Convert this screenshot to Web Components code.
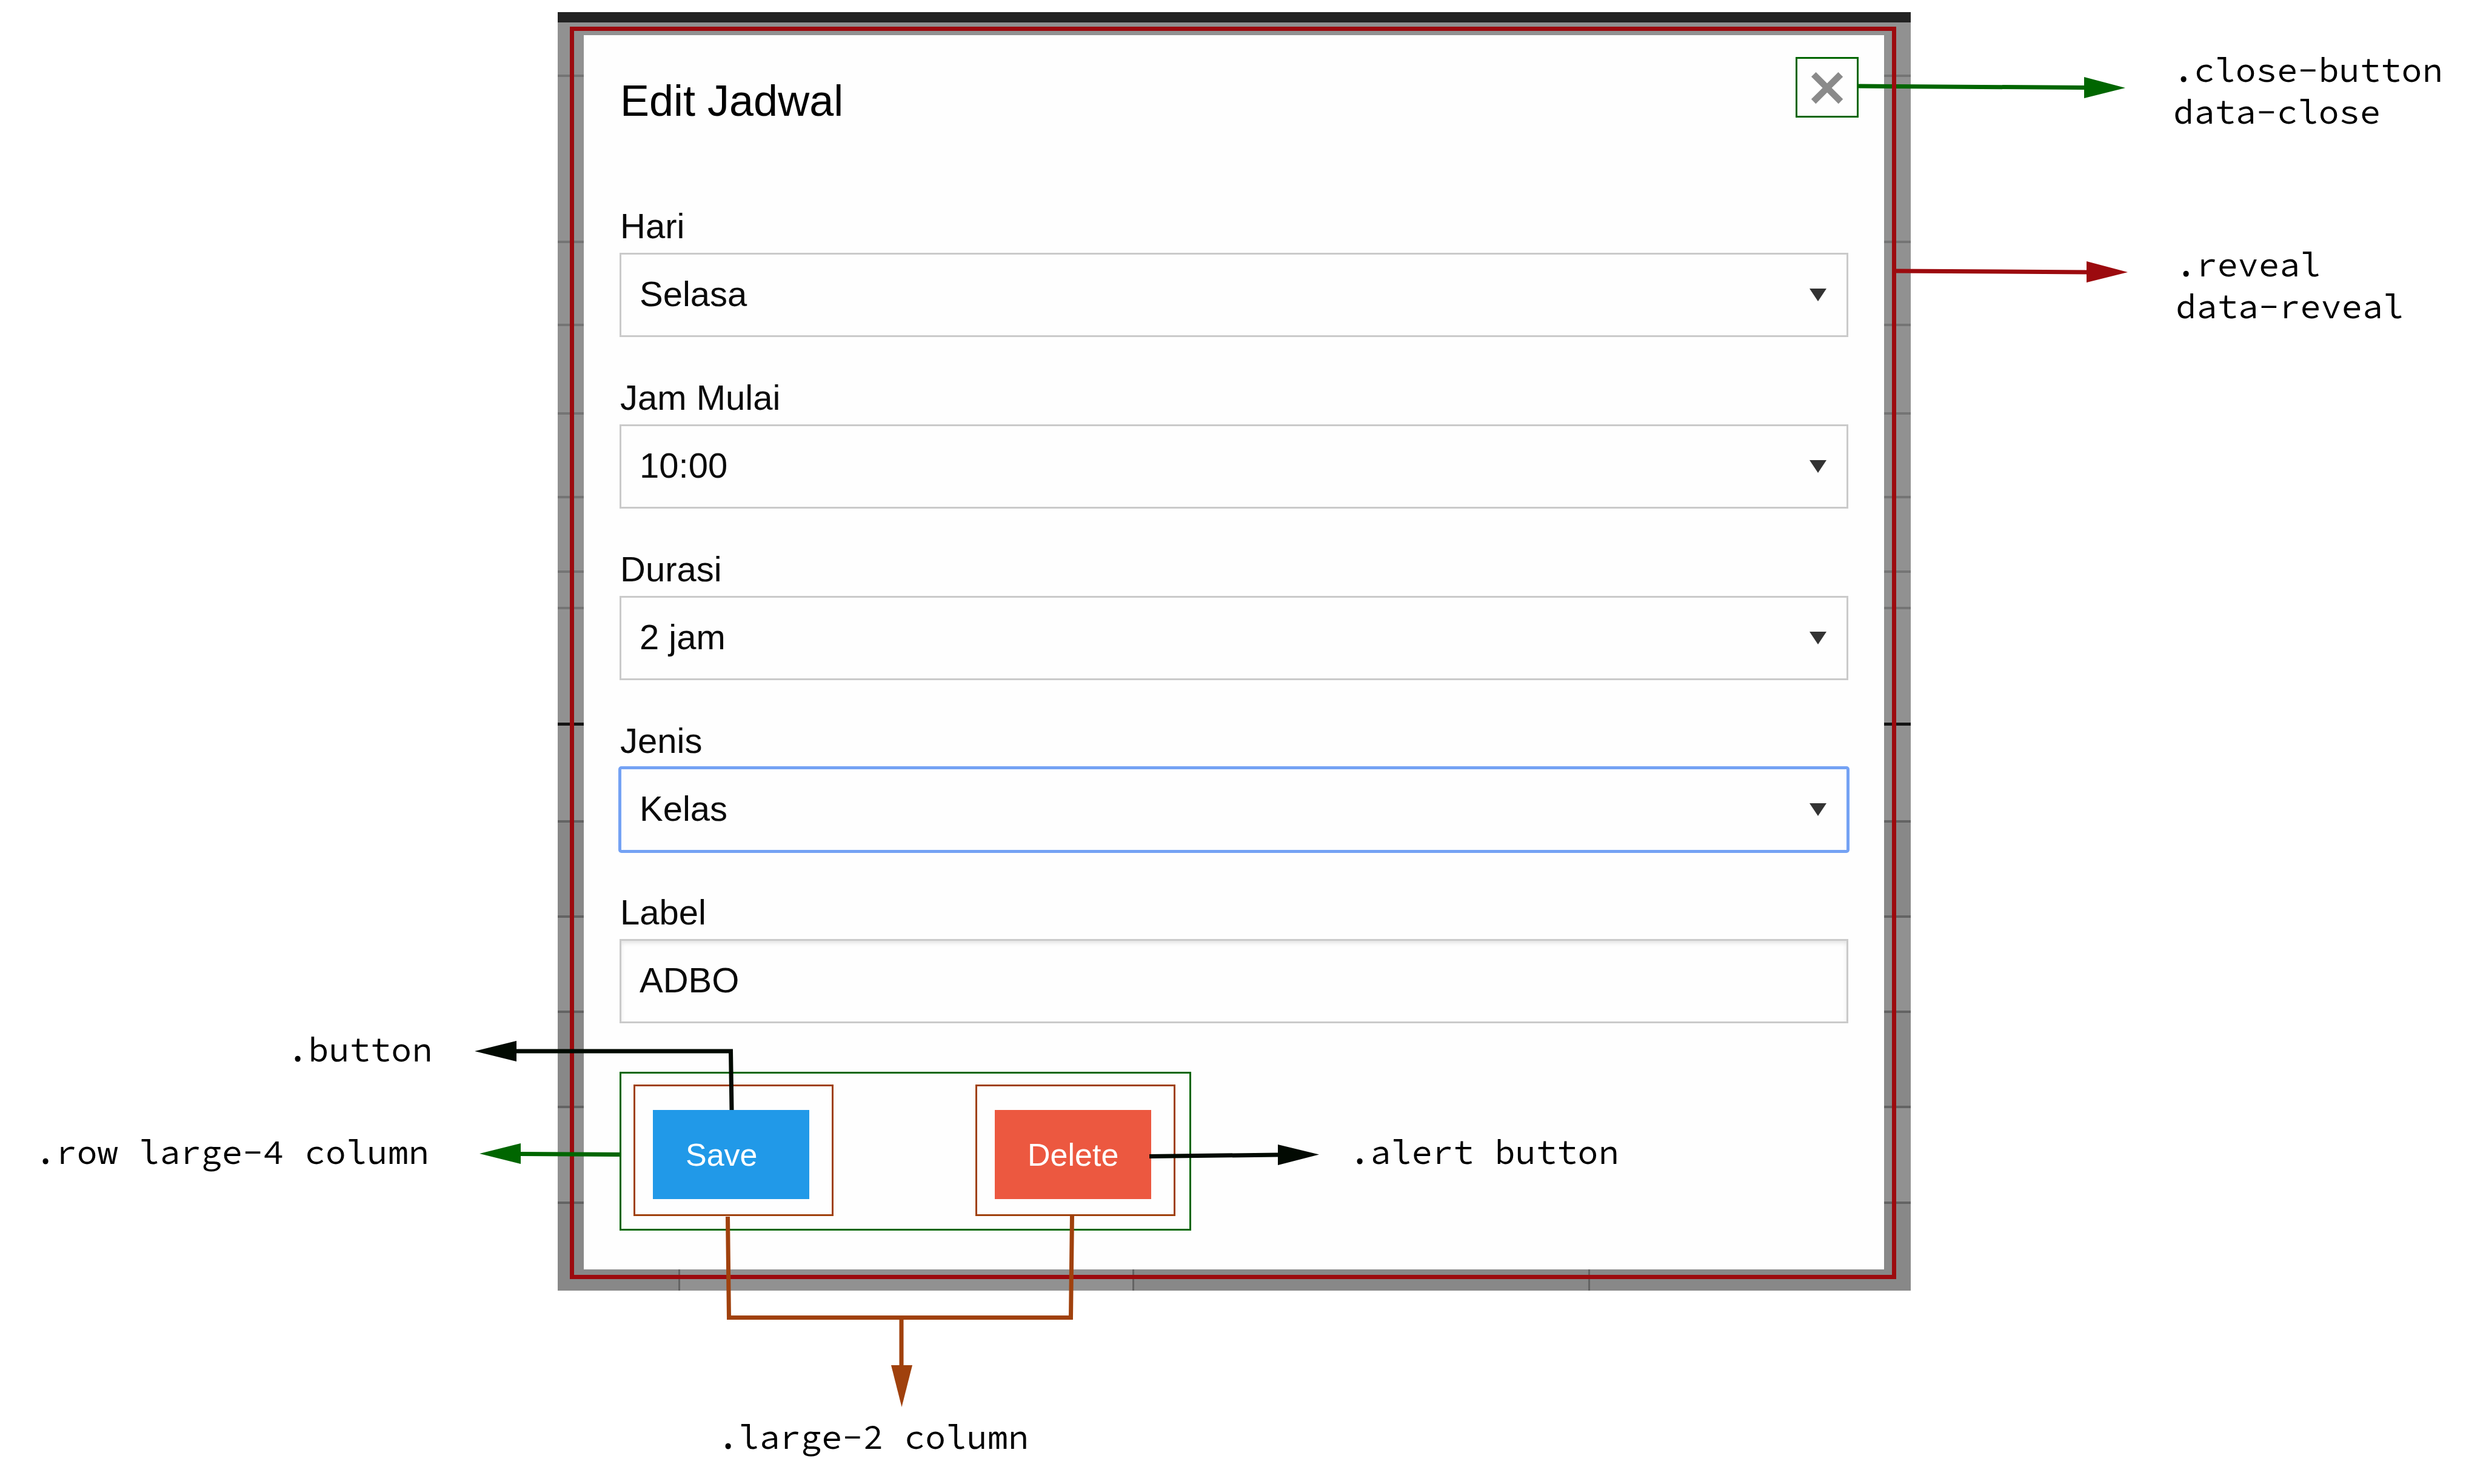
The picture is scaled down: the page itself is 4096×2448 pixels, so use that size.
<!DOCTYPE html>
<html lang="id">
<head>
<meta charset="utf-8">
<title>Edit Jadwal</title>
<style>
  body { margin: 0; background: #fff; color: #0a0a0a; font-family: "Liberation Sans", Arial, sans-serif; }
</style>
</head>
<body>
<annotated-page>
  <schedule-backdrop>
    <reveal-modal heading="Edit Jadwal">
      <form-field label="Hari" value="Selasa" kind="select"></form-field>
      <form-field label="Jam Mulai" value="10:00" kind="select"></form-field>
      <form-field label="Durasi" value="2 jam" kind="select"></form-field>
      <form-field label="Jenis" value="Kelas" kind="select" active></form-field>
      <form-field label="Label" value="ADBO" kind="text"></form-field>
      <button-row slot="actions">
        <action-button>Save</action-button>
        <action-button alert>Delete</action-button>
      </button-row>
    </reveal-modal>
  </schedule-backdrop>

  <arrow-layer slot="start" side="start"></arrow-layer>
  <call-out slot="start" style="--x:-446px;--y:1677px">.button</call-out>
  <call-out slot="start" style="--x:-862px;--y:1846px">.row large-4 column</call-out>
  <call-out slot="start" style="--x:1306px;--y:1846px">.alert button</call-out>
  <call-out slot="start" style="--x:264px;--y:2316px">.large-2 column</call-out>

  <arrow-layer slot="end" side="end"></arrow-layer>
  <call-out slot="end" style="--x:433px;--y:61px">.close-button<br>data-close</call-out>
  <call-out slot="end" style="--x:437px;--y:382px">.reveal<br>data-reveal</call-out>
</annotated-page>

<script>
const define = (name, html, setup) => customElements.define(name, class extends HTMLElement {
  constructor() {
    super();
    this.attachShadow({ mode: 'open' }).innerHTML = html;
  }
  connectedCallback() { if (setup) setup(this, this.shadowRoot); }
});

// Page: a frame between two gutters; notes hang from the frame's two top corners.
define('annotated-page', `
  <style>
    :host { display: grid; grid-template-columns: 920fr 2232fr 944fr; padding-top: 20px; overflow: hidden; min-height: calc(100vh - 20px); align-items: start; }
    main { grid-column: 2; position: relative; }
    .anchor { position: absolute; top: 0; width: 0; height: 0; }
    .start { left: 0; }
    .end { left: 100%; }
  </style>
  <main>
    <slot></slot>
    <div class="anchor start"><slot name="start"></slot></div>
    <div class="anchor end"><slot name="end"></slot></div>
  </main>`);

// Dimmed timetable behind the dialog.
define('schedule-backdrop', `
  <style>
    :host {
      display: block; padding: 24px 24px 19px 20px;
      --l: #919191; --d: #888; --r: #747474; --s: #636363;
      background:
        linear-gradient(90deg, var(--d) 199px, var(--s) 199px 202px, var(--l) 202px 948px, var(--s) 948px 951px, var(--d) 951px 1700px, var(--s) 1700px 1703px, var(--d) 1703px) 0 1966px / 100% 200px no-repeat,
        linear-gradient(
          #222 0 17px, var(--l) 17px 103px,
          var(--r) 103px 107px, var(--l) 107px 377px,
          var(--r) 377px 381px, var(--l) 381px 514px,
          var(--r) 514px 518px, var(--l) 518px 660px,
          var(--r) 660px 664px, var(--l) 664px 798px,
          var(--r) 798px 802px, var(--l) 802px 921px,
          var(--r) 921px 925px, var(--l) 925px 981px,
          var(--r) 981px 985px, var(--l) 985px 1172px,
          #141414 1172px 1177px, var(--l) 1177px 1333px,
          var(--s) 1333px 1337px, var(--d) 1337px 1490px,
          var(--s) 1490px 1494px, var(--l) 1494px 1647px,
          var(--s) 1647px 1651px, var(--d) 1651px 1804px,
          var(--s) 1804px 1808px, var(--l) 1808px 1962px,
          var(--s) 1962px 1966px, var(--d) 1966px);
    }
    .outline { border: 7px solid #9c0a0e; padding: 7px 13px 9px 16px; }
  </style>
  <div class="outline"><slot></slot></div>`);

define('reveal-modal', `
  <style>
    :host { display: block; background: #fefefe; }
    header { display: flex; justify-content: space-between; align-items: flex-start; padding: 36px 42px 0 60px; }
    h1 { margin: 32px 0 0; font-size: 72px; line-height: 80px; font-weight: 400; color: #000; }
    button { width: 104px; height: 100px; padding: 0; border: 3px solid #060; background: none; color: #8a8a8a; font: 108px/94px "Liberation Sans", Arial, sans-serif; -webkit-text-stroke: 3px #8a8a8a; }
    form { display: flex; flex-direction: column; gap: 58px; padding: 125px 59px 0; }
    footer { padding: 80px 59px 64px; }
  </style>
  <header><h1></h1><button type="button" aria-label="Close">×</button></header>
  <form><slot></slot></form>
  <footer><slot name="actions"></slot></footer>`,
  (el, root) => { root.querySelector('h1').textContent = el.getAttribute('heading'); });

define('form-field', `
  <style>
    :host { display: block; }
    label { display: block; font-size: 58px; line-height: 84px; padding: 0 0 2px 1px; }
    .box { display: grid; align-items: center; }
    .box > * { grid-area: 1 / 1; }
    select, input {
      appearance: none; box-sizing: border-box; width: 100%; height: 139px; margin: 0; padding: 0 30px 4px;
      border: 3px solid #cacaca; border-radius: 0; background: #fefefe; outline: none;
      color: #0a0a0a; font: 58px "Liberation Sans", Arial, sans-serif;
    }
    input { box-shadow: inset 0 4px 6px rgba(10,10,10,.1); }
    svg { justify-self: end; margin-right: 36px; width: 28px; height: 21px; pointer-events: none; }
    :host([active]) select { border-color: #74a2f4; border-radius: 3px; box-shadow: 0 0 0 2px #74a2f4; }
  </style>
  <label for="control"></label>
  <div class="box"></div>`,
  (el, root) => {
    const value = el.getAttribute('value');
    root.querySelector('label').textContent = el.getAttribute('label');
    root.querySelector('.box').innerHTML = el.getAttribute('kind') === 'select'
      ? `<select id="control"><option>${value}</option></select><svg viewBox="0 0 28 21"><path d="M0 0H28L14 21Z" fill="#333"/></svg>`
      : `<input id="control" type="text" value="${value}">`;
  });

define('button-row', `
  <style>
    :host { display: flex; justify-content: space-between; box-sizing: border-box; width: 943px; border: 3px solid #060; padding: 18px 23px 21px 20px; }
  </style>
  <slot></slot>`);

define('action-button', `
  <style>
    :host { display: block; box-sizing: border-box; width: 330px; height: 217px; border: 3px solid #a0410d; padding: 39px 0 0 29px; }
    button { display: block; width: 258px; height: 147px; border: 0; padding: 0 0 0 54px; text-align: left; background: #2199e8; color: #fefefe; font: 52px "Liberation Sans", Arial, sans-serif; }
    :host([alert]) button { background: #ec5840; }
  </style>
  <button type="button"><slot></slot></button>`);

define('call-out', `
  <style>
    :host { position: absolute; left: var(--x); top: var(--y); white-space: nowrap; color: #000; font: 57px/69px "Source Code Pro", "DejaVu Sans Mono", monospace; }
  </style>
  <slot></slot>`);

// Arrows, in coordinates shared by both sides; each side is shifted to its anchor.
const arrows = {
  start: `<g transform="translate(-920 -20)">
    <path d="M851 1734H1205.500L1207 1831" class="k"/><path d="M783 1734L852 1717V1751Z" fill="#020a02"/>
    <path d="M1023 1904.500L859 1903.500" class="g"/><path d="M791 1903L859 1886V1920Z" fill="#060"/>
    <path d="M1896 1907.500L2108 1905" class="k"/><path d="M2176 1904.500L2108 1888V1922Z" fill="#020a02"/>
    <path d="M1200.500 2007L1202.500 2173.500H1766.500L1768.500 2005M1487 2174V2253" class="b"/><path d="M1470 2252H1505L1487.500 2321Z" fill="#a0410d"/>
  </g>`,
  end: `<g transform="translate(-3152 -20)">
    <path d="M3066 142L3121 142.500M3128 142.500L3438 144.500" class="g"/><path d="M3506 145L3438 127V162Z" fill="#060"/>
    <path d="M3128 447L3443 449" class="r"/><path d="M3510 449L3442 431V466Z" fill="#9c0a0e"/>
  </g>`
};
define('arrow-layer', `
  <style>
    :host { position: absolute; left: 0; top: 0; }
    svg { display: block; width: 1px; height: 1px; overflow: visible; pointer-events: none; fill: none; stroke-width: 7; }
    .k { stroke: #020a02; } .g { stroke: #060; } .r { stroke: #9c0a0e; } .b { stroke: #a0410d; }
  </style>
  <svg aria-hidden="true"></svg>`,
  (el, root) => { root.querySelector('svg').innerHTML = arrows[el.getAttribute('side')]; });
</script>
</body>
</html>
